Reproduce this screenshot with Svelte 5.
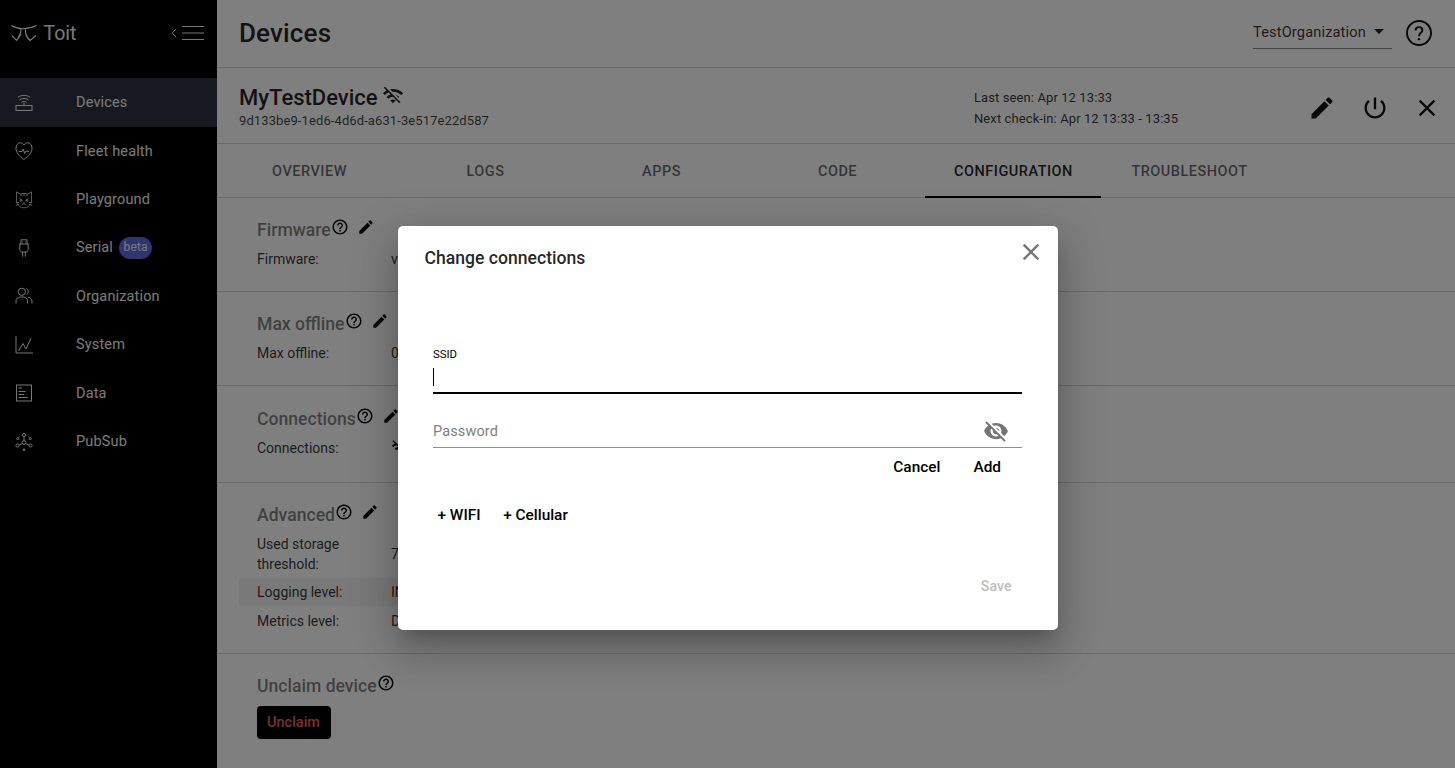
<script>
  const nav = [
    { label: 'Devices', icon: 'devices', active: true },
    { label: 'Fleet health', icon: 'health' },
    { label: 'Playground', icon: 'cat' },
    { label: 'Serial', icon: 'usb', badge: 'beta' },
    { label: 'Organization', icon: 'org' },
    { label: 'System', icon: 'chart' },
    { label: 'Data', icon: 'data' },
    { label: 'PubSub', icon: 'pubsub' }
  ];
  const tabs = ['Overview', 'Logs', 'Apps', 'Code', 'Configuration', 'Troubleshoot'];
  const P = {
    edit: 'M3 17.25V21h3.75L17.81 9.94l-3.75-3.75L3 17.25zM20.71 7.04c.39-.39.39-1.02 0-1.41l-2.34-2.34c-.39-.39-1.02-.39-1.41 0l-1.83 1.83 3.75 3.75 1.83-1.83z',
    power: 'M13 3h-2v10h2V3zm4.83 2.17l-1.42 1.42C17.99 7.86 19 9.81 19 12c0 3.87-3.13 7-7 7s-7-3.13-7-7c0-2.19 1.01-4.14 2.58-5.42L6.17 5.17C4.23 6.82 3 9.26 3 12c0 4.97 4.03 9 9 9s9-4.03 9-9c0-2.74-1.23-5.18-3.17-6.83z',
    close: 'M19 6.41L17.59 5 12 10.59 6.41 5 5 6.41 10.59 12 5 17.59 6.41 19 12 13.41 17.59 19 19 17.59 13.41 12z',
    help: 'M11 18h2v-2h-2v2zm1-16C6.48 2 2 6.48 2 12s4.48 10 10 10 10-4.48 10-10S17.52 2 12 2zm0 18c-4.41 0-8-3.59-8-8s3.59-8 8-8 8 3.59 8 8-3.59 8-8 8zm0-14c-2.21 0-4 1.79-4 4h2c0-1.1.9-2 2-2s2 .9 2 2c0 2-3 1.75-3 5h2c0-2.25 3-2.5 3-5 0-2.21-1.79-4-4-4z',
    eyeOff: 'M12 7c2.76 0 5 2.24 5 5 0 .65-.13 1.26-.36 1.83l2.92 2.92c1.51-1.26 2.7-2.89 3.43-4.75-1.73-4.39-6-7.5-11-7.5-1.4 0-2.74.25-3.98.7l2.16 2.16C10.74 7.13 11.35 7 12 7zM2 4.27l2.28 2.28.46.46C3.08 8.3 1.78 10.02 1 12c1.73 4.39 6 7.5 11 7.5 1.55 0 3.03-.3 4.38-.84l.42.42L19.73 22 21 20.73 3.27 3 2 4.27zM7.53 9.8l1.55 1.55c-.05.21-.08.43-.08.65 0 1.66 1.34 3 3 3 .22 0 .44-.03.65-.08l1.55 1.55c-.67.33-1.41.53-2.2.53-2.76 0-5-2.24-5-5 0-.79.2-1.53.53-2.2zm4.31-.78l3.15 3.15.02-.16c0-1.66-1.34-3-3-3l-.17.01z',
    wifiOff: 'M22.99 9C19.15 5.16 13.8 3.76 8.84 4.78l2.52 2.52c3.47-.17 6.99 1.05 9.63 3.7l2-2zm-4 4c-1.29-1.29-2.84-2.13-4.49-2.56l3.53 3.53.96-.97zM2 3.05L5.07 6.1C3.6 6.82 2.22 7.78 1 9l1.99 2c1.24-1.24 2.67-2.16 4.2-2.77l2.24 2.24C7.81 10.89 6.27 11.73 5 13v.01L6.99 15c1.36-1.36 3.14-2.04 4.92-2.06L18.98 20l1.27-1.26L3.29 1.79 2 3.05zM9 17l3 3 3-3c-1.65-1.66-4.34-1.66-6 0z'
  };
</script>

{#snippet mi(d, cls)}
  <svg class={cls} viewBox="0 0 24 24" aria-hidden="true"><path {d} /></svg>
{/snippet}

{#snippet navIcon(name)}
  <svg class="nav-icon" viewBox="0 0 18 18" aria-hidden="true">
    {#if name === 'devices'}
      <rect x="1" y="11.5" width="16" height="5" />
      <path d="M3 3.2C6 .8 12 .8 15 3.2M4.6 5.8C7 4 11 4 13.4 5.8M6.4 8.4C8 7.3 10 7.3 11.6 8.4M8 10.2C8.6 9.8 9.4 9.8 10 10.2" />
    {:else if name === 'health'}
      <path d="M9 17.5C4 14 1 10.5 1 6C1 3 3 .8 5.5 .8C7 .8 8.2 1.6 9 3C9.8 1.6 11 .8 12.5 .8C15 .8 17 3 17 6C17 10.5 14 14 9 17.5Z" />
      <path d="M3.8 9.5H7L8.2 7L9.6 11.5L10.8 9.3H14" />
    {:else if name === 'cat'}
      <g class="thin">
        <path d="M1.5 .8L5 3C7.5 2.2 10.5 2.2 13 3L16.5 .8V9C16.5 13.8 13 16.8 9 16.8C5 16.8 1.5 13.8 1.5 9Z" />
        <path d="M4.5 7.5L7.5 9.2M13.5 7.5L10.5 9.2M9 11V12.6M6.6 13.8L9 12.6L11.4 13.8M.6 11L4 11.6M17.4 11L14 11.6M.8 14.5L4 13.2M17.2 14.5L14 13.2M6 3V5.6M9 2.6V5.6M12 3V5.6" />
        <circle cx="6" cy="9.6" r=".8" />
        <circle cx="12" cy="9.6" r=".8" />
      </g>
    {:else if name === 'usb'}
      <path d="M6 .8H12V5H13.2V10.5C13.2 12 12.2 13 11 13H7C5.8 13 4.8 12 4.8 10.5V5H6ZM4.8 5H13.2M7.6 2.6V3.4M10.4 2.6V3.4M7.6 13V17.6M10.4 13V17.6" />
    {:else if name === 'org'}
      <circle cx="6.8" cy="4.8" r="3.6" />
      <path d="M1 16.5V14C1 11.5 3 10 5.5 10H8C10.5 10 12.5 11.5 12.5 14V16.5M11.5 1.6C13.6 2.4 13.8 6.6 11.5 7.8M13 10.2C15.3 10.6 17 12 17 14.2V16.5" />
    {:else if name === 'chart'}
      <path d="M1 0V17H18M3.5 15L8 7.5L11 13L16 2" />
    {:else if name === 'data'}
      <rect x="1.5" y="1" width="15" height="16" />
      <path d="M3.5 4H7M3.5 7.5H10.5M3.5 10.5H9M3.5 13.5H12.5" />
    {:else}
      <circle cx="9" cy="9.5" r="1.9" />
      <circle cx="9" cy="2" r="1.6" />
      <circle cx="9" cy="16.8" r="1" />
      <circle cx="2.8" cy="5.6" r="1.1" />
      <circle cx="15.2" cy="5.6" r="1.1" />
      <circle cx="2.5" cy="12.5" r="1.6" />
      <circle cx="15.5" cy="12.5" r="1.6" />
      <path d="M9 3.6V7.6M7.4 10.5L4 12M10.6 10.5L14 12" />
    {/if}
  </svg>
{/snippet}

<div class="page">
  <aside class="sidebar">
    <div class="brand">
      <svg class="logo" viewBox="0 0 26 18" aria-hidden="true">
        <path d="M.5 1.5Q11 8 25.5 1.5M10 5C10 10 8 13 5.5 16.5L.8 11.5M14.5 5C14 10 16 14 19 16.5L25 11.5M5.5 16.5C7.5 14 8.8 12.5 10 10M19 16.5C17 14.5 15.8 12.5 14.8 10" />
      </svg>
      <span class="brand-name">Toit</span>
      <svg class="collapse" viewBox="0 0 33 16" aria-hidden="true">
        <path d="M5 4L1.2 8L5 12M11 1.5H33M11 8H33M11 14.5H33" />
      </svg>
    </div>
    <nav class="nav">
      {#each nav as item}
        <div class="nav-item" class:active={item.active}>
          <span class="nav-icon-box">{@render navIcon(item.icon)}</span>
          <span class="nav-label">{item.label}</span>
          {#if item.badge}<span class="badge">{item.badge}</span>{/if}
        </div>
      {/each}
    </nav>
  </aside>

  <main class="main">
    <header class="topbar">
      <h1>Devices</h1>
      <div class="org-select">
        <span>TestOrganization</span>
        <span class="caret"></span>
      </div>
      <svg class="top-help" viewBox="0 0 24 24" aria-hidden="true">
        <circle cx="12" cy="12" r="9.6" />
        <path d="M9.3 9.9C9.3 8.4 10.5 7.3 12 7.3S14.7 8.4 14.7 9.9C14.7 11.9 12 11.9 12 14.6" />
        <circle class="dot" cx="12" cy="16.9" r=".95" />
      </svg>
    </header>

    <section class="device">
      <div class="device-id">
        <div class="device-name">
          <span>MyTestDevice</span>
          {@render mi(P.wifiOff, 'wifi')}
        </div>
        <div class="device-uuid">9d133be9-1ed6-4d6d-a631-3e517e22d587</div>
      </div>
      <div class="device-times">
        <div>Last seen: Apr 12 13:33</div>
        <div>Next check-in: Apr 12 13:33 - 13:35</div>
      </div>
      <div class="device-actions">
        {@render mi(P.edit, 'action')}
        {@render mi(P.power, 'action')}
        {@render mi(P.close, 'action')}
      </div>
    </section>

    <div class="tabs">
      {#each tabs as tab}
        <div class="tab" class:selected={tab === 'Configuration'}>{tab}</div>
      {/each}
    </div>

    <div class="config">
      <section class="group g-firmware">
        <div class="group-title"><h2>Firmware</h2>{@render mi(P.help, 'q')}{@render mi(P.edit, 'pen')}</div>
        <div class="row"><span class="key">Firmware:</span><span>v</span></div>
      </section>
      <section class="group g-offline">
        <div class="group-title"><h2>Max offline</h2>{@render mi(P.help, 'q')}{@render mi(P.edit, 'pen')}</div>
        <div class="row"><span class="key">Max offline:</span><span>0</span></div>
      </section>
      <section class="group g-conn">
        <div class="group-title"><h2>Connections</h2>{@render mi(P.help, 'q')}{@render mi(P.edit, 'pen')}</div>
        <div class="row"><span class="key">Connections:</span>{@render mi(P.wifiOff, 'conn-wifi')}</div>
      </section>
      <section class="group g-adv">
        <div class="group-title"><h2>Advanced</h2>{@render mi(P.help, 'q')}{@render mi(P.edit, 'pen')}</div>
        <div class="row tall"><span class="key">Used storage threshold:</span><span>7</span></div>
        <div class="row shaded"><span class="key">Logging level:</span><span>IN</span></div>
        <div class="row"><span class="key">Metrics level:</span><span>D</span></div>
      </section>
      <section class="group g-unclaim">
        <div class="group-title"><h2>Unclaim device</h2>{@render mi(P.help, 'q')}</div>
        <button class="unclaim">Unclaim</button>
      </section>
    </div>
  </main>

  <div class="overlay">
    <div class="modal" role="dialog">
      <div class="modal-head">
        <h3>Change connections</h3>
        {@render mi(P.close, 'modal-close')}
      </div>
      <div class="field ssid">
        <label for="ssid">SSID</label>
        <div class="ssid-input"><span class="cursor"></span></div>
      </div>
      <div class="field password">
        <span class="placeholder">Password</span>
        {@render mi(P.eyeOff, 'eye')}
      </div>
      <div class="field-actions">
        <span>Cancel</span>
        <span>Add</span>
      </div>
      <div class="adders">
        <span>+ WIFI</span>
        <span>+ Cellular</span>
      </div>
      <div class="modal-foot"><span>Save</span></div>
    </div>
  </div>
</div>

<style>
  :global(body) { margin: 0; background: #fff; font-family: Roboto, "Liberation Sans", sans-serif; }
  * { box-sizing: border-box; }
  .page { display: flex; width: 1455px; height: 768px; overflow: hidden; position: relative; color: rgba(0,0,0,.87); }

  .sidebar { width: 217px; flex: none; background: #000; color: #f5f5f5; }
  .brand { display: flex; align-items: center; height: 78px; padding: 0 13px 12px 11px; }
  .logo { width: 26px; height: 18px; fill: none; stroke: #f5f5f5; stroke-width: 1.1; }
  .brand-name { margin-left: 6.5px; font-size: 19.5px; font-weight: 400; letter-spacing: 0; color: #f0f0f0; }
  .collapse { width: 33px; height: 16px; margin-left: auto; fill: none; stroke: #f0f0f0; stroke-width: 1; }
  .nav { display: flex; flex-direction: column; }
  .nav-item { display: flex; align-items: center; height: 48.4px; font-size: 14.5px; letter-spacing: .15px; }
  .nav-item.active { background: #2c323e; height: 49px; }
  .nav-icon-box { width: 76px; padding-left: 15px; display: flex; flex: none; }
  .nav-icon { width: 18px; height: 18px; fill: none; stroke: #f0f0f0; stroke-width: 1; }
  .thin { stroke-width: .75; }
  .badge { margin-left: 6px; height: 22px; padding: 0 4.5px; border-radius: 11px; background: #5e6ae0; font-size: 12px; line-height: 21px; }

  .main { flex: 1; min-width: 0; }
  .topbar { display: flex; align-items: center; height: 68px; padding: 0 21px 0 22px; border-bottom: 1px solid #d6d6d6; }
  h1 { margin: 0 auto 2px 0; font-size: 26px; font-weight: 500; letter-spacing: .15px; }
  .org-select { display: flex; align-items: center; width: 139px; height: 33px; margin-top: -3px; border-bottom: 1px solid #888; font-size: 14.6px; letter-spacing: .15px; color: rgba(0,0,0,.8); }
  .caret { width: 0; height: 0; margin-left: 8px; border: 5px solid transparent; border-top-color: #222; border-bottom: 0; }
  .top-help { width: 30px; height: 30px; margin: -2px 0 0 12px; fill: none; stroke: #111; stroke-width: 1.5; }
  .dot { fill: #111; stroke: none; }

  .device { display: flex; height: 76px; padding-left: 22px; border-bottom: 1px solid #d6d6d6; }
  .device-id { width: 735px; padding-top: 16px; }
  .device-name { display: flex; align-items: center; height: 27px; font-size: 22px; font-weight: 500; }
  .wifi { width: 22px; height: 22px; margin-left: 4px; margin-top: -4px; fill: #222; }
  .device-uuid { margin-top: 2px; font-size: 13px; letter-spacing: .1px; color: rgba(0,0,0,.75); }
  .device-times { width: 334px; padding-top: 19px; font-size: 13px; line-height: 21px; letter-spacing: .1px; color: rgba(0,0,0,.8); }
  .device-actions { display: flex; gap: 24.5px; padding-top: 26px; }
  .action { width: 28px; height: 28px; fill: #111; }

  .tabs { display: flex; height: 54px; padding-left: 4px; border-bottom: 1px solid #d6d6d6; }
  .tab { width: 176px; height: 54px; padding-left: 1px; display: flex; align-items: center; justify-content: center; font-size: 14.5px; font-weight: 500; text-transform: uppercase; letter-spacing: .5px; color: rgba(0,0,0,.6); }
  .tab.selected { color: rgba(0,0,0,.87); border-bottom: 2px solid #000; padding-top: 2px; }

  .config { padding: 0 0 0 22px; }
  .group { border-bottom: 1px solid #d6d6d6; margin-left: -22px; padding: 0 0 0 40px; }
  .group:last-child { border-bottom: 0; }
  .g-firmware { height: 94px; padding-top: 21px; }
  .g-offline { height: 94px; padding-top: 21px; }
  .g-conn { height: 97px; padding-top: 22px; }
  .g-adv { height: 171px; padding-top: 21px; }
  .g-unclaim { padding-top: 21px; }
  .group-title { display: flex; align-items: flex-start; height: 22px; }
  h2 { margin: 0; font-size: 17.6px; font-weight: 500; line-height: 22px; color: rgba(0,0,0,.5); }
  .q { width: 18px; height: 18px; margin-top: -1px; fill: #111; }
  .pen { width: 18px; height: 18px; margin-left: 8px; margin-top: -1px; fill: #111; }
  .row { display: flex; align-items: center; height: 20px; margin-top: 8px; font-size: 14px; color: rgba(0,0,0,.8); }
  .key { width: 134px; flex: none; line-height: 20px; }
  .conn-wifi { width: 18px; height: 18px; fill: #111; }
  .row.tall { height: 40px; }
  .row.tall .key { width: 110px; margin-right: 24px; }
  .row.shaded { width: 520px; height: 28px; margin-top: 4px; margin-left: -18px; padding-left: 18px; background: rgba(0,0,0,.05); }
  .row.shaded + .row { margin-top: 5px; }
  .unclaim { display: block; width: 74px; height: 33px; margin-top: 9px; padding: 0 1px 0 0; border: 0; border-radius: 4px; background: #000; color: #e8646e; font: 500 14.5px Roboto, sans-serif; }

  .overlay { position: absolute; inset: 0; background: rgba(0,0,0,.5); display: flex; justify-content: center; align-items: flex-start; padding-top: 226px; }
  .modal { width: 660px; height: 404px; background: #fff; border-radius: 5px; box-shadow: 0 11px 15px -7px rgba(0,0,0,.2), 0 24px 38px 3px rgba(0,0,0,.14), 0 9px 46px 8px rgba(0,0,0,.12); }
  .modal-head { display: flex; justify-content: space-between; height: 114px; padding: 20px 13px 0 27px; }
  h3 { margin: 0; font-size: 17.6px; font-weight: 500; line-height: 24px; color: rgba(0,0,0,.87); }
  .modal-close { width: 28px; height: 28px; margin-top: -8px; fill: #757575; }
  .field { margin: 0 35.5px; }
  .ssid { height: 54px; border-bottom: 2px solid #000; }
  label { display: block; font-size: 11.4px; line-height: 14px; color: #000; padding-top: 7px; }
  .ssid-input { padding-top: 7px; }
  .cursor { display: block; width: 1px; height: 18px; background: #000; }
  .password { display: flex; align-items: center; justify-content: space-between; height: 54px; margin-top: 0; padding-top: 22px; padding-right: 13px; border-bottom: 1px solid #8f8f8f; }
  .placeholder { font-size: 14.5px; color: #808080; letter-spacing: .12px; }
  .eye { width: 26px; height: 26px; fill: #757575; margin-top: -1px; }
  .field-actions { display: flex; justify-content: flex-end; gap: 33px; height: 39px; padding: 10px 56.5px 0 0; font-size: 15.4px; font-weight: 500; color: #000; }
  .adders { display: flex; gap: 22.5px; height: 50px; padding: 19px 0 0 40px; font-size: 15.4px; font-weight: 500; color: #000; }
  .modal-foot { display: flex; justify-content: flex-end; padding: 41px 46px 0 0; font-size: 14.2px; font-weight: 500; color: #bdbdbd; }
</style>
